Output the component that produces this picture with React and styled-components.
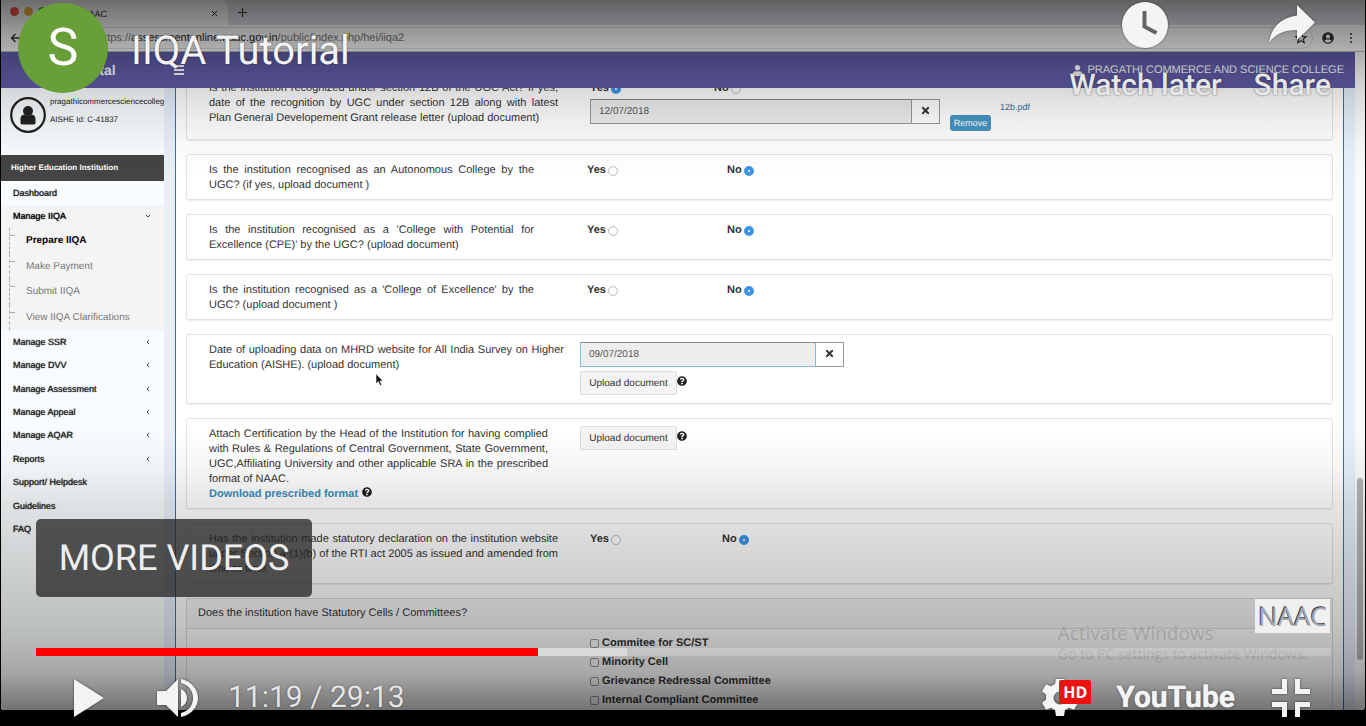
import React from "react";
import styled, { createGlobalStyle, css } from "styled-components";
import { FaTimes, FaQuestionCircle, FaUser, FaUserCircle } from "react-icons/fa";

const GlobalStyle = createGlobalStyle`
  * { box-sizing: border-box; }
  body { margin: 0; background: #000; font-family: "Liberation Sans", Arial, sans-serif; text-rendering: geometricPrecision; }
  button, input { font-family: inherit; margin: 0; text-rendering: inherit; }
  ul { list-style: none; margin: 0; padding: 0; }
  p { margin: 0; }
`;

const Stage = styled.main`
  position: relative;
  height: 100vh;
  display: flex;
  flex-direction: column;
  overflow: hidden;
  background: #000;
  padding: 0 1px 16px;
`;

const Frame = styled.div`
  position: relative;
  flex: 1;
  min-height: 0;
  display: flex;
  flex-direction: column;
  overflow: hidden;
  background: #fff;
  border-radius: 0 0 4px 4px;
`;

/* ---------- browser chrome ---------- */

const TabStrip = styled.div`
  flex: none;
  height: 25px;
  display: flex;
  align-items: center;
  background: #dee1e6;
  color: #333;
`;

const Tab = styled.div`
  width: 227px;
  height: 25px;
  display: flex;
  align-items: center;
  padding: 2px 10px 0 9px;
  background: #fbfbfb;
  border-radius: 0 8px 0 0;
  font-size: 9px;
`;

const Dot = styled.span`
  width: 9px;
  height: 9px;
  margin: 0 5px 4px 0;
  border-radius: 50%;
  background: ${(p) => p.$color};
`;

const TabTitle = styled.span`
  flex: 1;
  padding-left: 30px;
`;

const PlainButton = styled.button`
  display: inline-flex;
  align-items: center;
  justify-content: center;
  padding: 0;
  border: 0;
  background: none;
  color: inherit;
`;

const NewTab = styled(PlainButton)`
  width: 28px;
  height: 27px;
`;

const AddressBar = styled.div`
  flex: none;
  height: 27px;
  display: flex;
  align-items: center;
  gap: 9px;
  padding: 0 9px;
  background: #fff;
  color: #333;
  border-bottom: 1px solid #bbb;
`;

const Url = styled.div`
  flex: 1;
  display: flex;
  align-items: center;
  height: 22px;
  margin-left: 60px;
  padding-left: 7px;
  border: 1px solid #dcdfe4;
  border-radius: 11px;
  color: #777;
  font-size: 11px;
  b { color: #222; font-weight: 400; }
  span { flex: 1; }
`;

/* ---------- portal ---------- */

const Browser = styled.div`
  flex: 1;
  min-height: 0;
  display: flex;
`;

const Portal = styled.div`
  flex: 1;
  min-width: 0;
  display: flex;
  flex-direction: column;
`;

const ScrollTrack = styled.div`
  flex: none;
  width: 10px;
  display: flex;
  flex-direction: column;
  align-items: center;
  padding-bottom: 50px;
  background: #fafafa;
`;

const ScrollThumb = styled.div`
  width: 6px;
  height: 182px;
  margin-top: auto;
  border-radius: 3px;
  background: #b5b5b5;
`;

const Header = styled.header`
  flex: none;
  height: 36px;
  display: flex;
  align-items: center;
  padding: 0 11px 0 75px;
  background: #605ca8;
  color: #fff;
`;

const Brand = styled.strong`
  width: 98px;
  font-size: 14px;
`;

const Account = styled.span`
  margin-left: auto;
  display: flex;
  align-items: center;
  gap: 4px;
  font-size: 11px;
`;

const Body = styled.div`
  flex: 1;
  min-height: 0;
  display: flex;
  background: #e8effa;
`;

const Sidebar = styled.nav`
  flex: none;
  width: 163px;
  overflow: hidden;
  background: #f9fcfe;
  color: #222;
`;

const Profile = styled.div`
  height: 67px;
  display: flex;
  gap: 4px;
  padding: 9px 0 0 9px;
  font-size: 8px;
  line-height: 18px;
  svg { flex: none; }
`;

const ProfileText = styled.div`
  margin-top: -4px;
  min-width: 0;
  overflow: hidden;
`;

const SideHeading = styled.h2`
  margin: 0;
  height: 26px;
  padding-left: 10px;
  background: #444;
  color: #fff;
  font-size: 8px;
  line-height: 25px;
`;

const Menu = styled.ul`
  display: grid;
  grid-auto-rows: 1fr;
  height: ${(p) => p.$height}px;
`;

const menuLink = css`
  display: flex;
  align-items: center;
  justify-content: space-between;
  height: 100%;
  text-decoration: none;
`;

const MenuLink = styled.a`
  ${menuLink}
  padding: 0 13px 0 12px;
  color: ${(p) => (p.$open ? "#000" : "#222")};
  background: ${(p) => (p.$open ? "#f4f4f5" : "transparent")};
  font-size: 9px;
  text-shadow: 0 0 1px currentColor;
`;

const SubMenu = styled(Menu)`
  padding-left: 8px;
  background: #f4f4f5;
  li {
    display: flex;
    border-left: 1px dashed #aaa;
  }
  li::before {
    content: "";
    width: 5px;
    height: 7px;
    border-bottom: 1px dashed #aaa;
  }
`;

const SubLink = styled.a`
  ${menuLink}
  padding-left: 11px;
  font-size: 10px;
  color: ${(p) => (p.$active ? "#000" : "#777")};
  font-weight: ${(p) => (p.$active ? 700 : 400)};
`;

const Content = styled.section`
  flex: 1;
  min-width: 0;
  overflow: hidden;
  margin: 0 11px;
  padding: 0 10px;
  background: #fff;
  border: solid #3f6f9f;
  border-width: 0 1px;
  color: #333;
  font-size: 11px;
  line-height: 15px;
`;

const CardStack = styled.div`
  display: flex;
  flex-direction: column;
  gap: 14px;
  margin-top: -16px;
`;

const Card = styled.article`
  display: flex;
  padding: 7px 22px 6px;
  border: 1px solid #e2e2e2;
  border-radius: 3px;
  box-shadow: 0 1px 1px #eee;
`;

const QuestionColumn = styled.div`
  flex: none;
  width: 371px;
`;

const Question = styled.p`
  width: ${(p) => p.$width || 339}px;
  padding-top: 1px;
  text-align: justify;
`;

const DownloadLink = styled.a`
  margin-right: 4px;
  color: #3c8dbc;
  font-weight: 700;
  text-decoration: none;
`;

const Answer = styled.div`
  flex: 1;
  padding-left: ${(p) => p.$indent || 0}px;
  padding-bottom: ${(p) => p.$below || 0}px;
`;

const Options = styled.div`
  display: flex;
  padding-top: 1px;
`;

const RadioLabel = styled.label`
  display: flex;
  align-items: center;
  gap: 2px;
  width: ${(p) => p.$width || 140}px;
  font-weight: 700;
`;

const Radio = styled.input.attrs({ type: "radio" })`
  appearance: none;
  width: 10px;
  height: 10px;
  border: 1px solid #bbb;
  border-radius: 50%;
  background: #fff;
  &:checked { border: 4px solid #3e94e4; }
`;

const DateField = styled.div`
  display: flex;
  height: 25px;
  width: ${(p) => p.$width}px;
  margin-top: ${(p) => p.$top || 0}px;
  input {
    flex: 1;
    min-width: 0;
    padding: 0 8px;
    border: 1px solid ${(p) => (p.$focus ? "#7cc0de" : "#999")};
    border-top-color: #888;
    border-radius: 0;
    outline: 0;
    background: #eee;
    color: #555;
    font-size: 10px;
  }
  button {
    width: 28px;
    border: 1px solid #999;
    border-left: 0;
    background: #fff;
  }
`;

const Inline = styled.div`
  display: flex;
  align-items: flex-start;
`;

const UploadButton = styled.button`
  width: 97px;
  height: 24px;
  padding: 0;
  border: 1px solid #ddd;
  border-radius: 2px;
  background: #f4f4f4;
  color: #333;
  font-size: 10px;
`;

const UploadRow = styled(Inline)`
  margin-top: ${(p) => p.$top || 0}px;
  svg { margin-top: 5px; }
`;

const RemoveButton = styled.button`
  width: 41px;
  height: 16px;
  margin: 19px 9px 0 10px;
  padding: 0;
  border: 0;
  border-radius: 3px;
  background: #4596c4;
  color: #fff;
  font-size: 9px;
`;

const FileLink = styled.a`
  margin-top: 4px;
  color: #337099;
  font-size: 9px;
  text-decoration: none;
`;

const Panel = styled.article`
  border: 1px solid #ddd;
  height: 160px;
`;

const PanelTitle = styled.h3`
  margin: 0;
  padding: 0 11px;
  border-bottom: 1px solid #ddd;
  background: #f5f5f5;
  font-size: 11px;
  font-weight: 400;
  line-height: 29px;
`;

const CheckLabel = styled.label`
  display: flex;
  align-items: center;
  gap: 3px;
  height: 19px;
  font-weight: 700;
`;

const Checks = styled.div`
  padding: 5px 0 0 403px;
`;

const Check = styled.input.attrs({ type: "checkbox" })`
  appearance: none;
  width: 9px;
  height: 9px;
  border: 1px solid #999;
  border-radius: 2px;
`;

/* ---------- player overlay ---------- */

const TopShade = styled.div`
  position: absolute;
  inset: 0 0 auto;
  height: 180px;
  background: linear-gradient(
    rgba(0,0,0,.57) 0, rgba(0,0,0,.5) 12px, rgba(0,0,0,.37) 38px, rgba(0,0,0,.22) 70px,
    rgba(0,0,0,.13) 95px, rgba(0,0,0,.07) 120px, rgba(0,0,0,.02) 150px, rgba(0,0,0,0) 180px
  );
`;

const BottomShade = styled.div`
  position: absolute;
  inset: auto 0 0;
  height: 280px;
  background: linear-gradient(
    to top,
    rgba(0,0,0,.55) 0, rgba(0,0,0,.44) 20px, rgba(0,0,0,.34) 37px, rgba(0,0,0,.29) 58px,
    rgba(0,0,0,.24) 85px, rgba(0,0,0,.17) 150px, rgba(0,0,0,.1) 208px, rgba(0,0,0,.04) 242px,
    rgba(0,0,0,0) 280px
  );
`;

const Cursor = styled.svg`
  position: absolute;
  left: 374px;
  top: 373px;
`;

const Watermark = styled.p`
  position: absolute;
  right: 59px;
  bottom: 60px;
  font-family: "Open Sans", sans-serif;
  font-size: 14px;
  line-height: 22px;
  color: rgba(90, 90, 90, .28);
  strong { display: block; font-size: 19px; font-weight: 400; }
`;

const Badge = styled.div`
  position: absolute;
  right: 36px;
  bottom: 93px;
  padding: 0 3px;
  background: #f0f0f0;
  color: #a4abb4;
  font-family: "Open Sans", sans-serif;
  font-size: 26px;
  line-height: 34px;
  text-shadow: -1px -1px 0 #444;
`;

const Overlay = styled.div`
  position: absolute;
  inset: 0;
  display: flex;
  flex-direction: column;
  padding: 0 35px 0 36px;
  color: #f1f1f1;
  font-family: Roboto, sans-serif;
`;

const TitleRow = styled.div`
  display: flex;
  align-items: flex-start;
  margin-left: -18px;
  padding-top: 2px;
`;

const Avatar = styled.a`
  width: 90px;
  height: 90px;
  margin-top: 1px;
  border-radius: 50%;
  background: #689f38;
  color: #fff;
  font-size: 52px;
  line-height: 90px;
  text-align: center;
  text-decoration: none;
`;

const Title = styled.a`
  flex: 1;
  margin-left: 23px;
  color: #f4f4f4;
  font-size: 40px;
  line-height: 98px;
  text-decoration: none;
  text-shadow: 0 0 2px rgba(0, 0, 0, .5);
`;

const TopAction = styled(PlainButton)`
  flex-direction: column;
  gap: 20px;
  margin-left: 32px;
  color: #e6e6e6;
  font-size: 30px;
  font-weight: 500;
  line-height: 36px;
  text-shadow: 0 0 2px rgba(0, 0, 0, .6);
  svg { filter: drop-shadow(0 0 1px rgba(0, 0, 0, .5)); }
`;

const MoreVideos = styled.button`
  align-self: flex-start;
  width: 276px;
  height: 78px;
  margin: auto 0 51px;
  padding: 0;
  border: 0;
  border-radius: 5px;
  background: rgba(36, 36, 36, .76);
  color: #eee;
  font-size: 36px;
`;

const Progress = styled.input.attrs({ type: "range" })`
  appearance: none;
  display: block;
  width: 100%;
  height: 8px;
  background: linear-gradient(
    to right,
    #f00 0 38.8%, rgba(255,255,255,.5) 38.8% 45.6%, rgba(255,255,255,.2) 45.6%
  );
  &::-webkit-slider-thumb { appearance: none; width: 0; height: 0; }
`;

const Controls = styled.div`
  height: 70px;
  display: flex;
  align-items: center;
  padding: 13px 21px 0 36px;
  svg { filter: drop-shadow(0 0 1px rgba(0, 0, 0, .6)); }
`;

const Time = styled.span`
  flex: 1;
  margin-left: 28px;
  font-size: 30px;
  color: #e4e4e4;
  text-shadow: 0 0 2px rgba(0, 0, 0, .5);
`;

const Volume = styled(PlainButton)`
  margin-left: 52px;
`;

const Settings = styled(PlainButton)`
  position: relative;
  width: 50px;
  justify-content: flex-start;
`;

const Hd = styled.span`
  position: absolute;
  left: 18px;
  top: 1px;
  width: 32px;
  height: 24px;
  border-radius: 2px;
  background: #ee1111;
  color: #fff;
  font-family: "Open Sans", sans-serif;
  font-size: 16px;
  font-weight: 700;
  line-height: 24px;
`;

const Wordmark = styled.a`
  margin: 0 37px 0 25px;
  color: #f4f4f4;
  font-family: Roboto, sans-serif;
  font-size: 30px;
  font-weight: 700;
  text-decoration: none;
  text-shadow: 0 0 1px #f4f4f4, 0 0 3px rgba(0, 0, 0, .6);
`;

const sideItems = [
  ["Manage SSR", true],
  ["Manage DVV", true],
  ["Manage Assessment", true],
  ["Manage Appeal", true],
  ["Manage AQAR", true],
  ["Reports", true],
  ["Support/ Helpdesk", false],
  ["Guidelines", false],
  ["FAQ", false],
];

const subItems = ["Prepare IIQA", "Make Payment", "Submit IIQA", "View IIQA Clarifications"];

const committees = [
  "Commitee for SC/ST",
  "Minority Cell",
  "Grievance Redressal Committee",
  "Internal Compliant Committee",
];

function Chevron({ open }) {
  return (
    <svg width="6" height="6" viewBox="0 0 6 6" fill="none" stroke="#444">
      <path d={open ? "M.8 1.800l2.200 2.200 2.200-2.200" : "M4.200.8L2 3l2.200 2.200"} />
    </svg>
  );
}

function YesNo({ name, value = "no", width }) {
  return (
    <Options>
      <RadioLabel $width={width}>
        Yes
        <Radio name={name} defaultChecked={value === "yes"} />
      </RadioLabel>
      <RadioLabel $width={width}>
        No
        <Radio name={name} defaultChecked={value === "no"} />
      </RadioLabel>
    </Options>
  );
}

function DateInput({ value, label, ...rest }) {
  return (
    <DateField {...rest}>
      <input aria-label={label} defaultValue={value} />
      <button aria-label="Clear date">
        <FaTimes size={11} color="#333" />
      </button>
    </DateField>
  );
}

function Upload({ top }) {
  return (
    <UploadRow $top={top}>
      <UploadButton>Upload document</UploadButton>
      <FaQuestionCircle size={10} color="#222" />
    </UploadRow>
  );
}

function FormCard({ question, questionWidth, children, ...answer }) {
  return (
    <Card>
      <QuestionColumn>
        <Question $width={questionWidth}>{question}</Question>
      </QuestionColumn>
      <Answer {...answer}>{children}</Answer>
    </Card>
  );
}

function SideMenu() {
  return (
    <Sidebar>
      <Profile>
        <svg width="36" height="36" viewBox="0 0 36 36">
          <circle cx="18" cy="18" r="16.8" fill="none" stroke="#222" strokeWidth="2.2" />
          <circle cx="18" cy="14" r="5" fill="#222" />
          <path d="M10.500 26v-4c0-3.500 2.500-4.500 4.500-4.500q3 2.400 6 0c2 0 4.500 1 4.500 4.500v4q0 1.500-2 1.500h-11q-2 0-2-1.500z" fill="#222" />
        </svg>
        <ProfileText>
          <div>pragathicommercesciencecollege</div>
          <div>AISHE Id: C-41837</div>
        </ProfileText>
      </Profile>
      <SideHeading>Higher Education Institution</SideHeading>
      <Menu $height={47}>
        <li><MenuLink href="#dashboard">Dashboard</MenuLink></li>
        <li>
          <MenuLink href="#iiqa" $open>
            Manage IIQA
            <Chevron open />
          </MenuLink>
        </li>
      </Menu>
      <SubMenu $height={102}>
        {subItems.map((t, i) => (
          <li key={t}><SubLink href="#iiqa" $active={i === 0}>{t}</SubLink></li>
        ))}
      </SubMenu>
      <Menu $height={211}>
        {sideItems.map(([t, arrow]) => (
          <li key={t}>
            <MenuLink href="#menu">
              {t}
              {arrow && <Chevron />}
            </MenuLink>
          </li>
        ))}
      </Menu>
    </Sidebar>
  );
}

function Form() {
  return (
    <Content>
      <CardStack>
        <FormCard
          questionWidth={349}
          question="Is the institution recognized under section 12B of the UGC Act? If yes, date of the recognition by UGC under section 12B along with latest Plan General Developement Grant release letter (upload document)"
          $indent={10}
          $below={2}
        >
          <YesNo name="ugc12b" value="yes" width={124} />
          <Inline>
            <DateInput label="12B recognition date" value="12/07/2018" $width={350} $top={3} />
            <RemoveButton>Remove</RemoveButton>
            <FileLink href="#file">12b.pdf</FileLink>
          </Inline>
        </FormCard>
        <FormCard
          questionWidth={325}
          question="Is the institution recognised as an Autonomous College by the UGC? (if yes, upload document )"
          $indent={7}
        >
          <YesNo name="autonomous" />
        </FormCard>
        <FormCard
          questionWidth={325}
          question="Is the institution recognised as a 'College with Potential for Excellence (CPE)' by the UGC? (upload document)"
          $indent={7}
        >
          <YesNo name="cpe" />
        </FormCard>
        <FormCard
          questionWidth={325}
          question="Is the institution recognised as a 'College of Excellence' by the UGC? (upload document )"
          $indent={7}
        >
          <YesNo name="excellence" />
        </FormCard>
        <FormCard
          questionWidth={355}
          question="Date of uploading data on MHRD website for All India Survey on Higher Education (AISHE). (upload document)"
          $below={2}
        >
          <DateInput label="AISHE upload date" value="09/07/2018" $width={264} $focus />
          <Upload top={4} />
        </FormCard>
        <FormCard
          question={
            <>
              Attach Certification by the Head of the Institution for having complied with Rules &amp;
              Regulations of Central Government, State Government, UGC,Affiliating University and other
              applicable SRA in the prescribed format of NAAC.
              <br />
              <DownloadLink href="#format">Download prescribed format</DownloadLink>
              <FaQuestionCircle size={10} color="#222" />
            </>
          }
        >
          <Upload />
        </FormCard>
        <FormCard
          questionWidth={349}
          question="Has the institution made statutory declaration on the institution website under Section 4 (1)(b) of the RTI act 2005 as issued and amended from time to time."
          $indent={10}
        >
          <YesNo name="rti" width={132} />
        </FormCard>
        <Panel>
          <PanelTitle>Does the institution have Statutory Cells / Committees?</PanelTitle>
          <Checks>
            {committees.map((c) => (
              <CheckLabel key={c}><Check />{c}</CheckLabel>
            ))}
          </Checks>
        </Panel>
      </CardStack>
    </Content>
  );
}

export default function App() {
  return (
    <Stage>
      <GlobalStyle />
      <Frame>
        <TabStrip>
          <Tab>
            <Dot $color="#f0524f" />
            <Dot $color="#f2b23a" />
            <Dot $color="#38b54a" />
            <TabTitle>NAAC</TabTitle>
            <PlainButton aria-label="Close tab">
              <svg width="7" height="7" viewBox="0 0 7 7" stroke="#222"><path d="M1 1l5 5M6 1L1 6" /></svg>
            </PlainButton>
          </Tab>
          <NewTab aria-label="New tab">
            <svg width="9" height="9" viewBox="0 0 9 9" stroke="#222"><path d="M4.500 0v9M0 4.500h9" /></svg>
          </NewTab>
        </TabStrip>
        <AddressBar>
          <PlainButton aria-label="Back">
            <svg width="11" height="10" viewBox="0 0 11 10" fill="none" stroke="#333" strokeWidth="1.400"><path d="M11 5H1.500M5.500 1l-4 4 4 4" /></svg>
          </PlainButton>
          <Url>
            <span>https://<b>assessmentonline.naac.gov.in</b>/public/index.php/hei/iiqa2</span>
            <svg width="22" height="22" viewBox="0 0 22 22" fill="none" stroke="#333" strokeWidth="1.300">
              <path d="M11 6l1.500 3.500 3.500.3-2.700 2.300.9 3.600L11 13.800l-3.200 1.900.9-3.600L6 9.800l3.500-.3z" />
            </svg>
          </Url>
          <FaUserCircle size={12} />
          <svg width="13" height="12" viewBox="0 0 13 12" fill="#333">
            <circle cx="8" cy="2" r="1" /><circle cx="8" cy="6" r="1" /><circle cx="8" cy="10" r="1" />
          </svg>
        </AddressBar>
        <Browser>
          <Portal>
            <Header>
              <Brand>Portal</Brand>
              <PlainButton aria-label="Toggle menu">
                <svg width="10" height="10" viewBox="0 0 10 10" fill="#fff"><path d="M0 0h10v2H0zM0 4h10v2H0zM0 8h10v2H0z" /></svg>
              </PlainButton>
              <Account><FaUser size={11} />PRAGATHI COMMERCE AND SCIENCE COLLEGE</Account>
            </Header>
            <Body>
              <SideMenu />
              <Form />
            </Body>
          </Portal>
          <ScrollTrack><ScrollThumb /></ScrollTrack>
        </Browser>
        <Cursor width="9" height="14" viewBox="0 0 9 14">
          <path d="M1 .8v10l2.300-2.200 1.700 4 1.700-.8-1.700-3.800h3z" fill="#111" stroke="#fff" strokeWidth=".6" />
        </Cursor>
        <TopShade />
        <BottomShade />
      </Frame>
      <Watermark>
        <strong>Activate Windows</strong>
        Go to PC settings to activate Windows.
      </Watermark>
      <Badge>NAAC</Badge>
      <Overlay>
        <TitleRow>
          <Avatar href="#channel">S</Avatar>
          <Title href="#video">IIQA Tutorial</Title>
          <TopAction>
            <svg width="46" height="46" viewBox="0 0 46 46">
              <circle cx="23" cy="23" r="23" fill="#f4f4f4" />
              <path d="M20.500 9h4v14.500l11 5.700-2 3.600-13-7z" fill="#666" />
            </svg>
            Watch later
          </TopAction>
          <TopAction>
            <svg width="46" height="46" viewBox="0 0 46 46">
              <path d="M28 3l18 17.500L28 38V28C15 28 6 32 0 41 2 26 11 16 28 13.500z" fill="#f4f4f4" />
            </svg>
            Share
          </TopAction>
        </TitleRow>
        <MoreVideos>MORE VIDEOS</MoreVideos>
        <Progress aria-label="Seek" defaultValue={38} />
        <Controls>
          <PlainButton aria-label="Play">
            <svg width="32" height="38" viewBox="0 0 32 38"><path d="M2 0v38l30-19z" fill="#f4f4f4" /></svg>
          </PlainButton>
          <Volume aria-label="Mute">
            <svg width="44" height="40" viewBox="0 0 44 40" fill="#f4f4f4">
              <path d="M1 13v14h9l12 12V1L10 13z" />
              <path d="M25 11v18c4-2 6-5 6-9s-2-7-6-9z" />
              <path d="M25 1v4c8 2 12 8 12 15s-4 13-12 15v4c10-2 17-10 17-19S35 3 25 1z" />
            </svg>
          </Volume>
          <Time>11:19 / 29:13</Time>
          <Settings aria-label="Settings">
            <svg width="38" height="38" viewBox="0 0 38 38">
              <path
                fill="#f4f4f4"
                fillRule="evenodd"
                d="M15 0h8l1 5 4 2.300 5-2 4 7-4 3.200v5l4 3.200-4 7-5-2-4 2.300-1 6h-8l-1-6-4-2.300-5 2-4-7 4-3.200v-5l-4-3.200 4-7 5 2L14 5zM19 12.500a6.500 6.500 0 100 13 6.500 6.500 0 000-13z"
              />
            </svg>
            <Hd>HD</Hd>
          </Settings>
          <Wordmark href="#youtube">YouTube</Wordmark>
          <PlainButton aria-label="Exit full screen">
            <svg width="38" height="38" viewBox="0 0 38 38" fill="#f4f4f4">
              <path d="M10 0h5v15H0v-5h10zM23 0h5v10h10v5H23zM0 23h15v15h-5V28H0zM23 23h15v5H28v10h-5z" />
            </svg>
          </PlainButton>
        </Controls>
      </Overlay>
    </Stage>
  );
}
